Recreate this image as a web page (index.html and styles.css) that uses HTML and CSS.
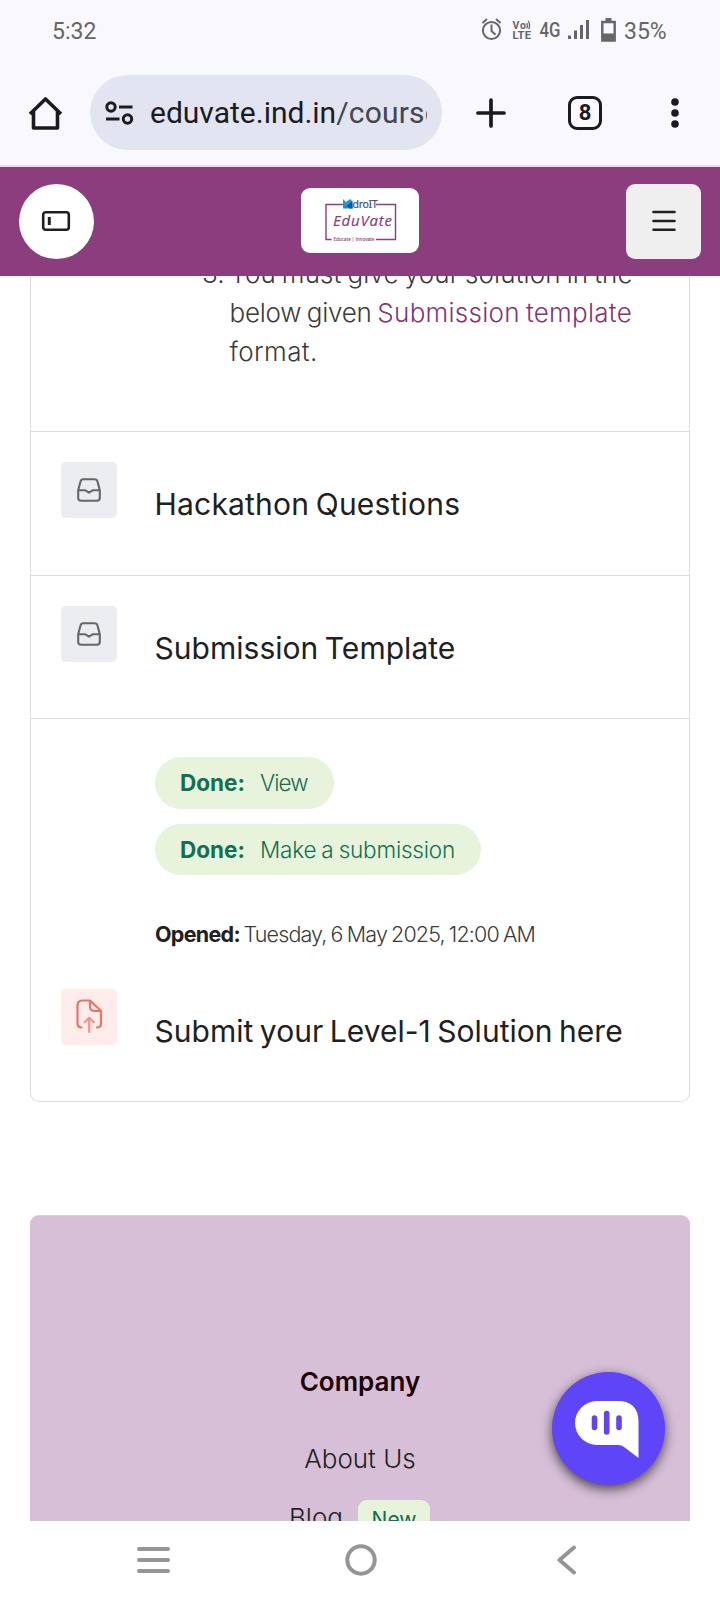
FILE: index.html
```html
<!DOCTYPE html>
<html lang="en">
<head>
<meta charset="utf-8">
<title>EduVate course</title>
<link rel="stylesheet" href="styles.css">
</head>
<body>
<div class="screen">
  <div class="status">
    <span class="clock">5:32</span>
    <svg class="status-icons" width="150" height="30" viewBox="0 0 150 30" fill="none" stroke="#666" stroke-width="2">
      <circle cx="11.500" cy="14.500" r="8.600"/><path d="M11.500 8.500v6.500l4 3.800M2.500 7l4.500-4M20.500 7l-4.500-4"/>
      <path d="M46.800 7a6.500 6.500 0 0 1 0 5.500M48.300 5a9 9 0 0 1 .5 8" stroke-width="1.300"/>
      <g fill="#666" stroke="none" font-family="Roboto, sans-serif">
        <text x="32.500" y="12.700" font-size="10.500" font-weight="700" textLength="13.500">Vo</text>
        <text x="32.500" y="22.900" font-size="11.200" font-weight="700" textLength="18.500">LTE</text>
        <text x="59.500" y="20.800" font-size="20" font-weight="500" textLength="21" lengthAdjust="spacingAndGlyphs">4G</text>
        <path d="M88 19.500h3v3.500h-3zM94 14.500h3v8.500h-3zM100 9h3v14h-3zM106 4h3v19h-3z"/>
      </g>
      <path d="M122.300 6h12.400v18.500h-12.400z" stroke-width="2.400"/><path fill="#666" stroke="none" d="M122 17.500h13v7.500h-13zM125.500 2h6v4h-6z"/>
    </svg>
    <span class="battery">35%</span>
  </div>
  <div class="toolbar">
    <svg class="home" width="36" height="36" viewBox="0 0 36 36" fill="none" stroke="#1b1b1f" stroke-width="3.600" stroke-linejoin="round"><path d="M2 19L17.500 4 33 19M5.500 16v17h24V16"/></svg>
    <div class="url">
      <svg width="30" height="26" viewBox="0 0 30 26" fill="none" stroke="#1b1b1f" stroke-width="3"><circle cx="7" cy="7" r="4.200"/><circle cx="23.500" cy="19" r="4.200"/><path d="M15 7h13.500M2 19h13.500"/></svg>
      <div class="address">eduvate.ind.in<span>/course</span></div>
    </div>
    <svg class="plus" width="30" height="30" viewBox="0 0 30 30" stroke="#1b1b1f" stroke-width="3.700" stroke-linecap="round"><path d="M15 2v26M2 15h26"/></svg>
    <div class="tabs">8</div>
    <svg class="dots" width="8" height="30" viewBox="0 0 8 30" fill="#1b1b1f"><circle cx="4" cy="4" r="3.800"/><circle cx="4" cy="15" r="3.800"/><circle cx="4" cy="26" r="3.800"/></svg>
  </div>
  <header class="site-header">
    <div class="drawer"><svg width="30" height="22" viewBox="0 0 30 22" fill="none" stroke="#202020" stroke-width="2.600"><rect x="2.200" y="2.200" width="25.600" height="17.600" rx="2.500"/><path d="M8.300 7v8" stroke-width="3"/></svg></div>
    <div class="logo">
      <svg width="118" height="65" viewBox="0 0 118 65">
        <path d="M42 16.500H25v35h5.500M75 16.500h19.500v35H75" fill="none" stroke="#8b3d7d" stroke-width="1.400"/>
        <path d="M42 11l3 3 4-3 2 2 1 7.500H42z" fill="#1c9bd8"/><path d="M43 20.500l8.500-8v8h-3l-2-2z" fill="#14569c"/>
        <text x="51.500" y="20" font-family="Noto Sans, sans-serif" font-size="10.500" fill="#3c5080" stroke="#3c5080" stroke-width=".2" textLength="25">droIT</text>
        <g fill="#8b3d7d"><text x="32" y="38" font-family="Open Sans, sans-serif" font-size="15" font-style="italic" stroke="#8b3d7d" stroke-width=".2" textLength="59">EduVate</text>
        <text x="32.500" y="52.800" font-family="Open Sans, sans-serif" font-size="4.600" font-weight="600" textLength="41">Educate | Innovate</text></g>
      </svg>
    </div>
    <div class="menu"><svg width="24" height="22" viewBox="0 0 24 22" stroke="#202020" stroke-width="2.600" stroke-linecap="round"><path d="M1.500 2h21M1.500 11h21M1.500 19.700h21"/></svg></div>
  </header>
  <main class="page">
    <section class="card">
      <div class="intro">
        <span class="num">3.</span>
        <p><span class="l1">You must give your solution in the</span><br><span class="l2">below given</span> <a>Submission template</a><br><span class="l3">format.</span></p>
      </div>
      <div class="item">
        <div class="tile"><svg width="26" height="26" viewBox="0 0 26 26" fill="none" stroke="#666" stroke-width="2.100" stroke-linejoin="round"><path d="M2.200 13.200L4.500 4.500Q5 2.200 7.500 2.200h11q2.500 0 3 2.300l2.300 8.700v7.600q0 3-3 3H5.200q-3 0-3-3zH9l4 2.500 4-2.500h6.800"/></svg></div>
        <h3 class="t1">Hackathon Questions</h3>
      </div>
      <div class="item second">
        <div class="tile"><svg width="26" height="26" viewBox="0 0 26 26" fill="none" stroke="#666" stroke-width="2.100" stroke-linejoin="round"><path d="M2.200 13.200L4.500 4.500Q5 2.200 7.500 2.200h11q2.500 0 3 2.300l2.300 8.700v7.600q0 3-3 3H5.200q-3 0-3-3zH9l4 2.500 4-2.500h6.800"/></svg></div>
        <h3 class="t2">Submission Template</h3>
      </div>
      <div class="assignment">
        <div class="pill"><b>Done:</b><span class="v1">View</span></div>
        <div class="pill p2"><b>Done:</b><span class="v2">Make a submission</span></div>
        <div class="opened"><b>Opened:</b><span>Tuesday, 6 May 2025, 12:00 AM</span></div>
      </div>
      <div class="item last">
        <div class="tile pink"><svg width="28" height="36" viewBox="0 0 28 36" fill="none" stroke="#ea7468" stroke-width="2.200" stroke-linecap="round" stroke-linejoin="round"><path d="M6.500 29.500q-4-.3-4-4V7.500q0-5 5-5H15l11 10.500v12.500q0 3.700-4 4M15 2.500v6q0 4.500 4.500 4.500H26"/><path stroke="#f09489" d="M14.200 34V20M9.700 24.300l4.500-4.500 4.500 4.500"/></svg></div>
        <h3 class="t3">Submit your Level-1 Solution here</h3>
      </div>
    </section>
    <footer class="footer">
      <h4>Company</h4>
      <div class="link">About Us</div>
      <div class="link blog"><span>Blog</span><em>New</em></div>
    </footer>
    <div class="chat"><svg width="113" height="113" viewBox="0 0 113 113"><path fill="#fff" d="M45 29h20.500Q86.500 29 86.500 50v36L72 75q-2.500-2-6-2H45a22 22 0 0 1 0-44z"/><path d="M42.500 46v9.500M54.700 41.500v18.500M67 46v9.500" stroke="#5e46f8" stroke-width="5.600" stroke-linecap="round"/></svg></div>
  </main>
  <nav class="system">
    <svg width="33" height="28" viewBox="0 0 33 28" stroke="#959595" stroke-width="4" stroke-linecap="round"><path d="M2 3h29M2 14h29M2 25h29"/></svg>
    <svg class="circle" width="34" height="34" viewBox="0 0 34 34" fill="none" stroke="#959595" stroke-width="4"><circle cx="17" cy="17" r="13.700"/></svg>
    <svg width="20" height="30" viewBox="0 0 20 30" fill="none" stroke="#959595" stroke-width="4" stroke-linecap="round" stroke-linejoin="round"><path d="M17 2.500L2.500 15 17 27.500"/></svg>
  </nav>
</div>
</body>
</html>
```
FILE: styles.css
```css
* { box-sizing: border-box; }
body { margin: 0; background: #fff; font-family: Inter, sans-serif; }
svg { display: block; flex: none; }
h3, h4, p { margin: 0; font-weight: inherit; }
.screen { width: 720px; height: 1600px; display: flex; flex-direction: column; overflow: hidden; }

.status { height: 62px; flex: none; background: #f9f8ff; display: flex; align-items: flex-start; padding: 16px 53px 0 52px; font: 23px/32px Roboto, sans-serif; color: #666; }
.status-icons { margin-left: auto; }
.battery { width: 45px; margin-left: -6px; margin-right: -2px; }

.toolbar { height: 105px; flex: none; background: #f9f8ff; border-bottom: 2px solid #eadcf0; display: flex; align-items: center; padding: 0 41px 2px 28px; }
.url { width: 352px; height: 75px; margin-left: 26px; border-radius: 38px; background: #e2e5f1; display: flex; align-items: center; padding-left: 14px; flex: none; }
.address { width: 277px; margin-left: 16px; padding-top: 1px; overflow: hidden; white-space: nowrap; font: 30px/40px Roboto, sans-serif; color: #1b1b1f; }
.address span { color: #45464f; letter-spacing: .2px; }
.plus { margin-left: 33.500px; }
.tabs { width: 34px; height: 34px; margin-left: 62.500px; border: 3px solid #1b1b1f; border-radius: 9px; font: 700 22px/28px Roboto, sans-serif; text-align: center; color: #1b1b1f; }
.dots { margin-left: auto; }

.site-header { height: 109px; flex: none; background: #8b3d7d; display: flex; justify-content: space-between; align-items: center; padding: 0 19px; }
.drawer, .menu { width: 75px; height: 75px; display: flex; align-items: center; justify-content: center; background: #fff; border-radius: 50%; padding: 0 1px 1px 0; }
.menu { background: #efefef; border-radius: 9px; padding-right: 0; }
.logo { width: 118px; height: 65px; background: #fff; border-radius: 9px; margin-bottom: 2px; }

.page { flex: 1; min-height: 0; overflow: hidden; position: relative; padding: 0 30px; }
.card { border: 1px solid #dedede; border-top: 0; border-radius: 0 0 9px 9px; height: 826px; }
.intro { height: 155px; padding-left: 171px; display: flex; font-size: 26px; line-height: 39.3px; font-weight: 300; color: #3b3b3b; white-space: nowrap; word-spacing: -1.500px; }
.intro p, .num { margin-top: -22.500px; }
.num { width: 27.500px; flex: none; }
.l1 { letter-spacing: .12px; }
.l2 { letter-spacing: -.25px; }
.l3 { letter-spacing: .4px; }
.intro a { color: #833577; letter-spacing: .27px; }
.item { height: 144px; border-top: 1px solid #dedede; padding: 30px 0 0 30px; display: flex; }
.second { height: 143px; }
.tile { width: 56px; height: 56px; flex: none; border-radius: 5px; background: #ecedf1; display: flex; align-items: center; justify-content: center; }
.pink { background: #ffeceb; padding: 0 0 2px; }
.item h3 { font-size: 30px; line-height: 44px; color: #202020; margin: 20px 0 0 37.500px; white-space: nowrap; word-spacing: -2px; letter-spacing: .03px; }
.item .t1 { letter-spacing: .2px; }
.assignment { height: 271px; border-top: 1px solid #dedede; padding: 38px 0 0 124px; display: flex; flex-direction: column; align-items: flex-start; font-size: 22.500px; }
.pill { height: 52px; border-radius: 26px; background: #e8f3dc; color: #12704f; display: flex; width: 179px; padding-left: 25px; line-height: 52px; font-weight: 300; white-space: nowrap; word-spacing: -1px; }
.pill b { width: 80px; font-weight: 700; }
.v1 { letter-spacing: -.9px; }
.v2 { letter-spacing: -.2px; }
.p2 { height: 51px; width: 326px; margin-top: 15px; }
.opened { margin-top: 43px; font-size: 21.500px; line-height: 32px; font-weight: 300; color: #3b3b3b; display: flex; white-space: nowrap; letter-spacing: -.85px; word-spacing: -1.100px; }
.opened b { width: 88.500px; font-weight: 700; color: #202020; letter-spacing: -.7px; }
.last { border: 0; height: 112px; padding-top: 0; }

.footer { height: 400px; margin-top: 113px; background: #d7bfd7; border-top: 1px solid #d5d2d6; border-radius: 9px 9px 0 0; padding-top: 146px; display: flex; flex-direction: column; align-items: center; font-size: 26px; line-height: 40px; }
.footer h4 { font-weight: 600; color: #1f0000; }
.link { font-weight: 300; color: #222; margin-top: 37px; }
.blog { display: flex; margin-top: 19px; }
.blog em { width: 72px; height: 40px; margin: 2px 1px 0 15px; border-radius: 9px; background: #e8f3dc; color: #12704f; font: 400 21px/39px Inter, sans-serif; text-align: center; }
.chat { position: absolute; left: 552px; top: 1096px; width: 113px; height: 113px; border-radius: 50%; background: #5e46f8; box-shadow: 0 4px 12px rgba(0,0,0,.65); }

.system { height: 79px; flex: none; background: #fff; display: flex; align-items: center; justify-content: space-between; padding: 0 143px 1px 137px; }
.circle { margin-right: 6px; }
```
